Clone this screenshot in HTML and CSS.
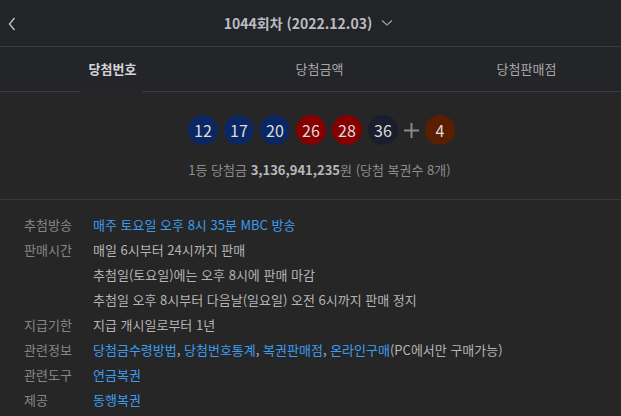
FILE: index.html
```html
<!DOCTYPE html>
<html lang="ko">
<head>
<meta charset="utf-8">
<link rel="stylesheet" href="styles.css">
</head>
<body>
<div class="app">
  <header class="top">
    <span class="back"><svg width="8" height="14" viewBox="0 0 8 14"><path d="M6.5 1 L1.5 7 L6.5 13" fill="none" stroke="#c8c8c8" stroke-width="1.3"/></svg></span>
    <div class="title">1044회차 (2022.12.03)<svg class="chev" width="12" height="8" viewBox="0 0 12 8"><path d="M1 1.5 L6 6 L11 1.5" fill="none" stroke="#a0a0a0" stroke-width="1.3"/></svg></div>
  </header>
  <nav class="tabs">
    <div class="tab active"><span>당첨번호</span></div>
    <div class="tab"><span>당첨금액</span></div>
    <div class="tab"><span>당첨판매점</span></div>
  </nav>
  <section class="result">
    <div class="balls">
      <span class="ball blue">12</span>
      <span class="ball blue">17</span>
      <span class="ball blue">20</span>
      <span class="ball red">26</span>
      <span class="ball red">28</span>
      <span class="ball dark">36</span>
      <svg class="plus" width="15" height="15" viewBox="0 0 15 15"><path d="M7.5 0 V15 M0 7.5 H15" stroke="#8a8a8a" stroke-width="2"/></svg>
      <span class="ball brown">4</span>
    </div>
    <p class="prize">1등 당첨금 <b>3,136,941,235</b>원 (당첨 복권수 8개)</p>
  </section>
  <dl class="info">
    <dt>추첨방송</dt><dd><a class="link">매주 토요일 오후 8시 35분 MBC 방송</a></dd>
    <dt>판매시간</dt><dd>매일 6시부터 24시까지 판매<br>추첨일(토요일)에는 오후 8시에 판매 마감<br>추첨일 오후 8시부터 다음날(일요일) 오전 6시까지 판매 정지</dd>
    <dt>지급기한</dt><dd>지급 개시일로부터 1년</dd>
    <dt>관련정보</dt><dd><a class="link">당첨금수령방법</a>, <a class="link">당첨번호통계</a>, <a class="link">복권판매점</a>, <a class="link">온라인구매</a>(PC에서만 구매가능)</dd>
    <dt>관련도구</dt><dd><a class="link">연금복권</a></dd>
    <dt>제공</dt><dd><a class="link">동행복권</a></dd>
  </dl>
</div>
</body>
</html>
```
FILE: styles.css
```css
* { box-sizing: border-box; }
html, body { margin: 0; padding: 0; background: #262626; }
body {
  font-family: "Noto Sans CJK KR", "Noto Sans", sans-serif;
  color: #b4b4b4;
  width: 621px;
  height: 416px;
  overflow: hidden;
}
.app { width: 621px; }
.top {
  height: 47px;
  background: #232427;
  border-bottom: 1px solid #3b3b3d;
  display: flex;
  align-items: center;
  justify-content: center;
  position: relative;
}
.back {
  position: absolute;
  left: 8px;
  top: 17px;
  display: block;
  line-height: 0;
}
.title {
  font-size: 14px;
  font-weight: 700;
  color: #b9bcc2;
  line-height: 20px;
  display: flex;
  align-items: center;
  margin-left: -4px;
  margin-top: 0;
}
.chev { margin-left: 9px; }
.tabs {
  display: grid;
  grid-template-columns: repeat(3, 207px);
  height: 45px;
  background: #242528;
  border-bottom: 1px solid #3b3b3d;
}
.tab {
  padding-left: 18px;
  display: flex;
  align-items: center;
  justify-content: center;
  font-size: 13px;
  color: #a8a8a8;
  position: relative;
}
.tab span { line-height: 20px; }
.tab.active { color: #d4d6da; font-weight: 700; }
.tab.active::after {
  content: "";
  position: absolute;
  left: 81px;
  width: 61px;
  bottom: -1px;
  height: 1px;
  background: #262628;
}
.result {
  border-bottom: 1px solid #3a3a3a;
  padding-top: 23px;
  height: 108px;
}
.balls {
  display: flex;
  justify-content: center;
  align-items: center;
  gap: 6px;
  padding-left: 22px;
}
.ball {
  width: 30px;
  height: 30px;
  border-radius: 50%;
  display: flex;
  align-items: center;
  justify-content: center;
  font-size: 16px;
  color: #dcdcdc;
  line-height: 1;
}
.blue { background: #0b2763; }
.red { background: #860000; }
.dark { background: #191d2d; }
.brown { background: #5a1e00; }
.plus { display: block; }
.prize {
  margin: 16px 0 0 0;
  text-align: center;
  padding-left: 18px;
  font-size: 13px;
  line-height: 18px;
  color: #8c8c8c;
}
.prize b { color: #b8b8b8; font-weight: 700; }
.info {
  margin: 0;
  padding: 12px 0 0 24px;
  display: grid;
  grid-template-columns: 69px 1fr;
  font-size: 13px;
  line-height: 25px;
}
.info dt { color: #868686; }
.info dd { margin: 0; color: #b4b4b4; }
.link { color: #3d9cf0; text-decoration: none; }
```
